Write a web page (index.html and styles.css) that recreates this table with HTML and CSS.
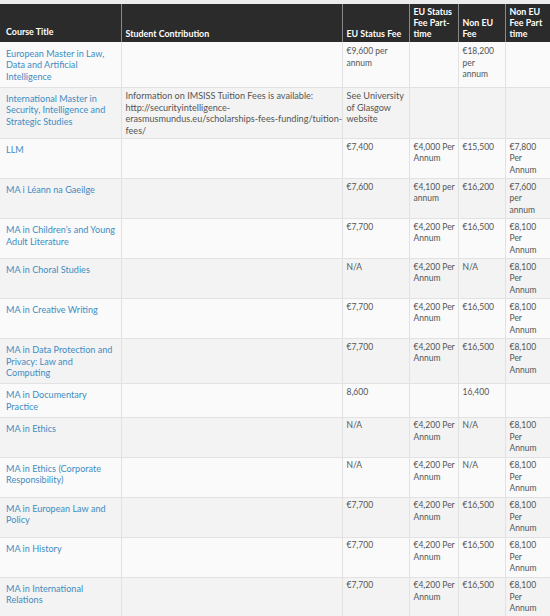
FILE: index.html
```html
<!DOCTYPE html>
<html lang="en">
<head>
<meta charset="utf-8">
<title>Course Fees</title>
<link rel="stylesheet" href="styles.css">
</head>
<body>
<table class="fees">
  <colgroup>
    <col class="c-title">
    <col class="c-contrib">
    <col class="c-eu">
    <col class="c-eupt">
    <col class="c-non">
    <col class="c-nonpt">
  </colgroup>
  <thead>
    <tr>
      <th class="first">Course Title</th>
      <th>Student Contribution</th>
      <th>EU Status Fee</th>
      <th>EU Status<br>Fee Part-<br>time</th>
      <th>Non EU<br>Fee</th>
      <th>Non EU<br>Fee Part<br>time</th>
    </tr>
  </thead>
  <tbody>
    <tr class="top-row">
      <td class="course"><a href="#">European Master in Law,<br>Data and Artificial<br>Intelligence</a></td>
      <td class="text"></td>
      <td>€9,600 per<br>annum</td>
      <td></td>
      <td>€18,200<br>per<br>annum</td>
      <td></td>
    </tr>
    <tr>
      <td class="course"><a href="#">International Master in<br>Security, Intelligence and<br>Strategic Studies</a></td>
      <td class="text">Information on IMSISS Tuition Fees is available:<br>http://securityintelligence-<br>erasmusmundus.eu/scholarships-fees-funding/tuition-<br>fees/</td>
      <td class="text">See University<br>of Glasgow<br>website</td>
      <td></td>
      <td></td>
      <td></td>
    </tr>
    <tr>
      <td class="course"><a href="#">LLM</a></td>
      <td class="text"></td>
      <td>€7,400</td>
      <td>€4,000 Per<br>Annum</td>
      <td>€15,500</td>
      <td>€7,800<br>Per<br>Annum</td>
    </tr>
    <tr>
      <td class="course"><a href="#">MA i Léann na Gaeilge</a></td>
      <td class="text"></td>
      <td>€7,600</td>
      <td>€4,100 per<br>annum</td>
      <td>€16,200</td>
      <td>€7,600<br>per<br>annum</td>
    </tr>
    <tr>
      <td class="course"><a href="#">MA in Children’s and Young<br>Adult Literature</a></td>
      <td class="text"></td>
      <td>€7,700</td>
      <td>€4,200 Per<br>Annum</td>
      <td>€16,500</td>
      <td>€8,100<br>Per<br>Annum</td>
    </tr>
    <tr>
      <td class="course"><a href="#">MA in Choral Studies</a></td>
      <td class="text"></td>
      <td>N/A</td>
      <td>€4,200 Per<br>Annum</td>
      <td>N/A</td>
      <td>€8,100<br>Per<br>Annum</td>
    </tr>
    <tr>
      <td class="course"><a href="#">MA in Creative Writing</a></td>
      <td class="text"></td>
      <td>€7,700</td>
      <td>€4,200 Per<br>Annum</td>
      <td>€16,500</td>
      <td>€8,100<br>Per<br>Annum</td>
    </tr>
    <tr>
      <td class="course"><a href="#">MA in Data Protection and<br>Privacy: Law and<br>Computing</a></td>
      <td class="text"></td>
      <td>€7,700</td>
      <td>€4,200 Per<br>Annum</td>
      <td>€16,500</td>
      <td>€8,100<br>Per<br>Annum</td>
    </tr>
    <tr>
      <td class="course"><a href="#">MA in Documentary<br>Practice</a></td>
      <td class="text"></td>
      <td>8,600</td>
      <td></td>
      <td>16,400</td>
      <td></td>
    </tr>
    <tr>
      <td class="course"><a href="#">MA in Ethics</a></td>
      <td class="text"></td>
      <td>N/A</td>
      <td>€4,200 Per<br>Annum</td>
      <td>N/A</td>
      <td>€8,100<br>Per<br>Annum</td>
    </tr>
    <tr>
      <td class="course"><a href="#">MA in Ethics (Corporate<br>Responsibility)</a></td>
      <td class="text"></td>
      <td>N/A</td>
      <td>€4,200 Per<br>Annum</td>
      <td>N/A</td>
      <td>€8,100<br>Per<br>Annum</td>
    </tr>
    <tr>
      <td class="course"><a href="#">MA in European Law and<br>Policy</a></td>
      <td class="text"></td>
      <td>€7,700</td>
      <td>€4,200 Per<br>Annum</td>
      <td>€16,500</td>
      <td>€8,100<br>Per<br>Annum</td>
    </tr>
    <tr>
      <td class="course"><a href="#">MA in History</a></td>
      <td class="text"></td>
      <td>€7,700</td>
      <td>€4,200 Per<br>Annum</td>
      <td>€16,500</td>
      <td>€8,100<br>Per<br>Annum</td>
    </tr>
    <tr>
      <td class="course"><a href="#">MA in International<br>Relations</a></td>
      <td class="text"></td>
      <td>€7,700</td>
      <td>€4,200 Per<br>Annum</td>
      <td>€16,500</td>
      <td>€8,100<br>Per<br>Annum</td>
    </tr>
  </tbody>
</table>
</body>
</html>
```
FILE: styles.css
```css
html, body {
  margin: 0;
  padding: 0;
}
body {
  background: #ececec;
  padding-top: 4px;
  font-family: Lato, "Noto Sans", "DejaVu Sans", sans-serif;
  font-size: 8.5px;
  color: #555;
}
.fees {
  width: 550px;
  table-layout: fixed;
  border-collapse: collapse;
  white-space: nowrap;
}
.c-title { width: 121px; }
.c-contrib { width: 221px; }
.c-eu { width: 67px; }
.c-eupt { width: 49px; }
.c-non { width: 47px; }
.c-nonpt { width: 45px; }

.fees th {
  background: #2b2b2b;
  color: #fff;
  font-size: 8.9px;
  font-weight: 700;
  text-align: left;
  vertical-align: bottom;
  line-height: 11px;
  padding: 2px 4px 3px 4px;
  border-left: 1px solid #8a8a8a;
  overflow: hidden;
}
.fees th.first {
  border-left: none;
  padding-left: 6px;
  padding-bottom: 5px;
}
.fees td {
  vertical-align: top;
  line-height: 11.5px;
  padding: 2.5px 4px 2px 4px;
  border: 1px solid #e2e2e2;
  border-top: none;
  overflow: hidden;
}
.fees td:first-child { border-left: none; }
.fees tbody tr:nth-child(odd) td { background: #fafafa; }
.fees tbody tr:nth-child(even) td { background: #f3f3f3; }
.fees td.text {
  font-size: 9.1px;
}
.fees td.course {
  font-size: 9.1px;
  padding: 5px 4px 4.5px 6px;
}
.fees tr.top-row td { padding-top: 4px; }
.fees tr.top-row td.course { padding-top: 5.5px; }
.course a {
  color: #3f8cc2;
  text-decoration: none;
}
```
